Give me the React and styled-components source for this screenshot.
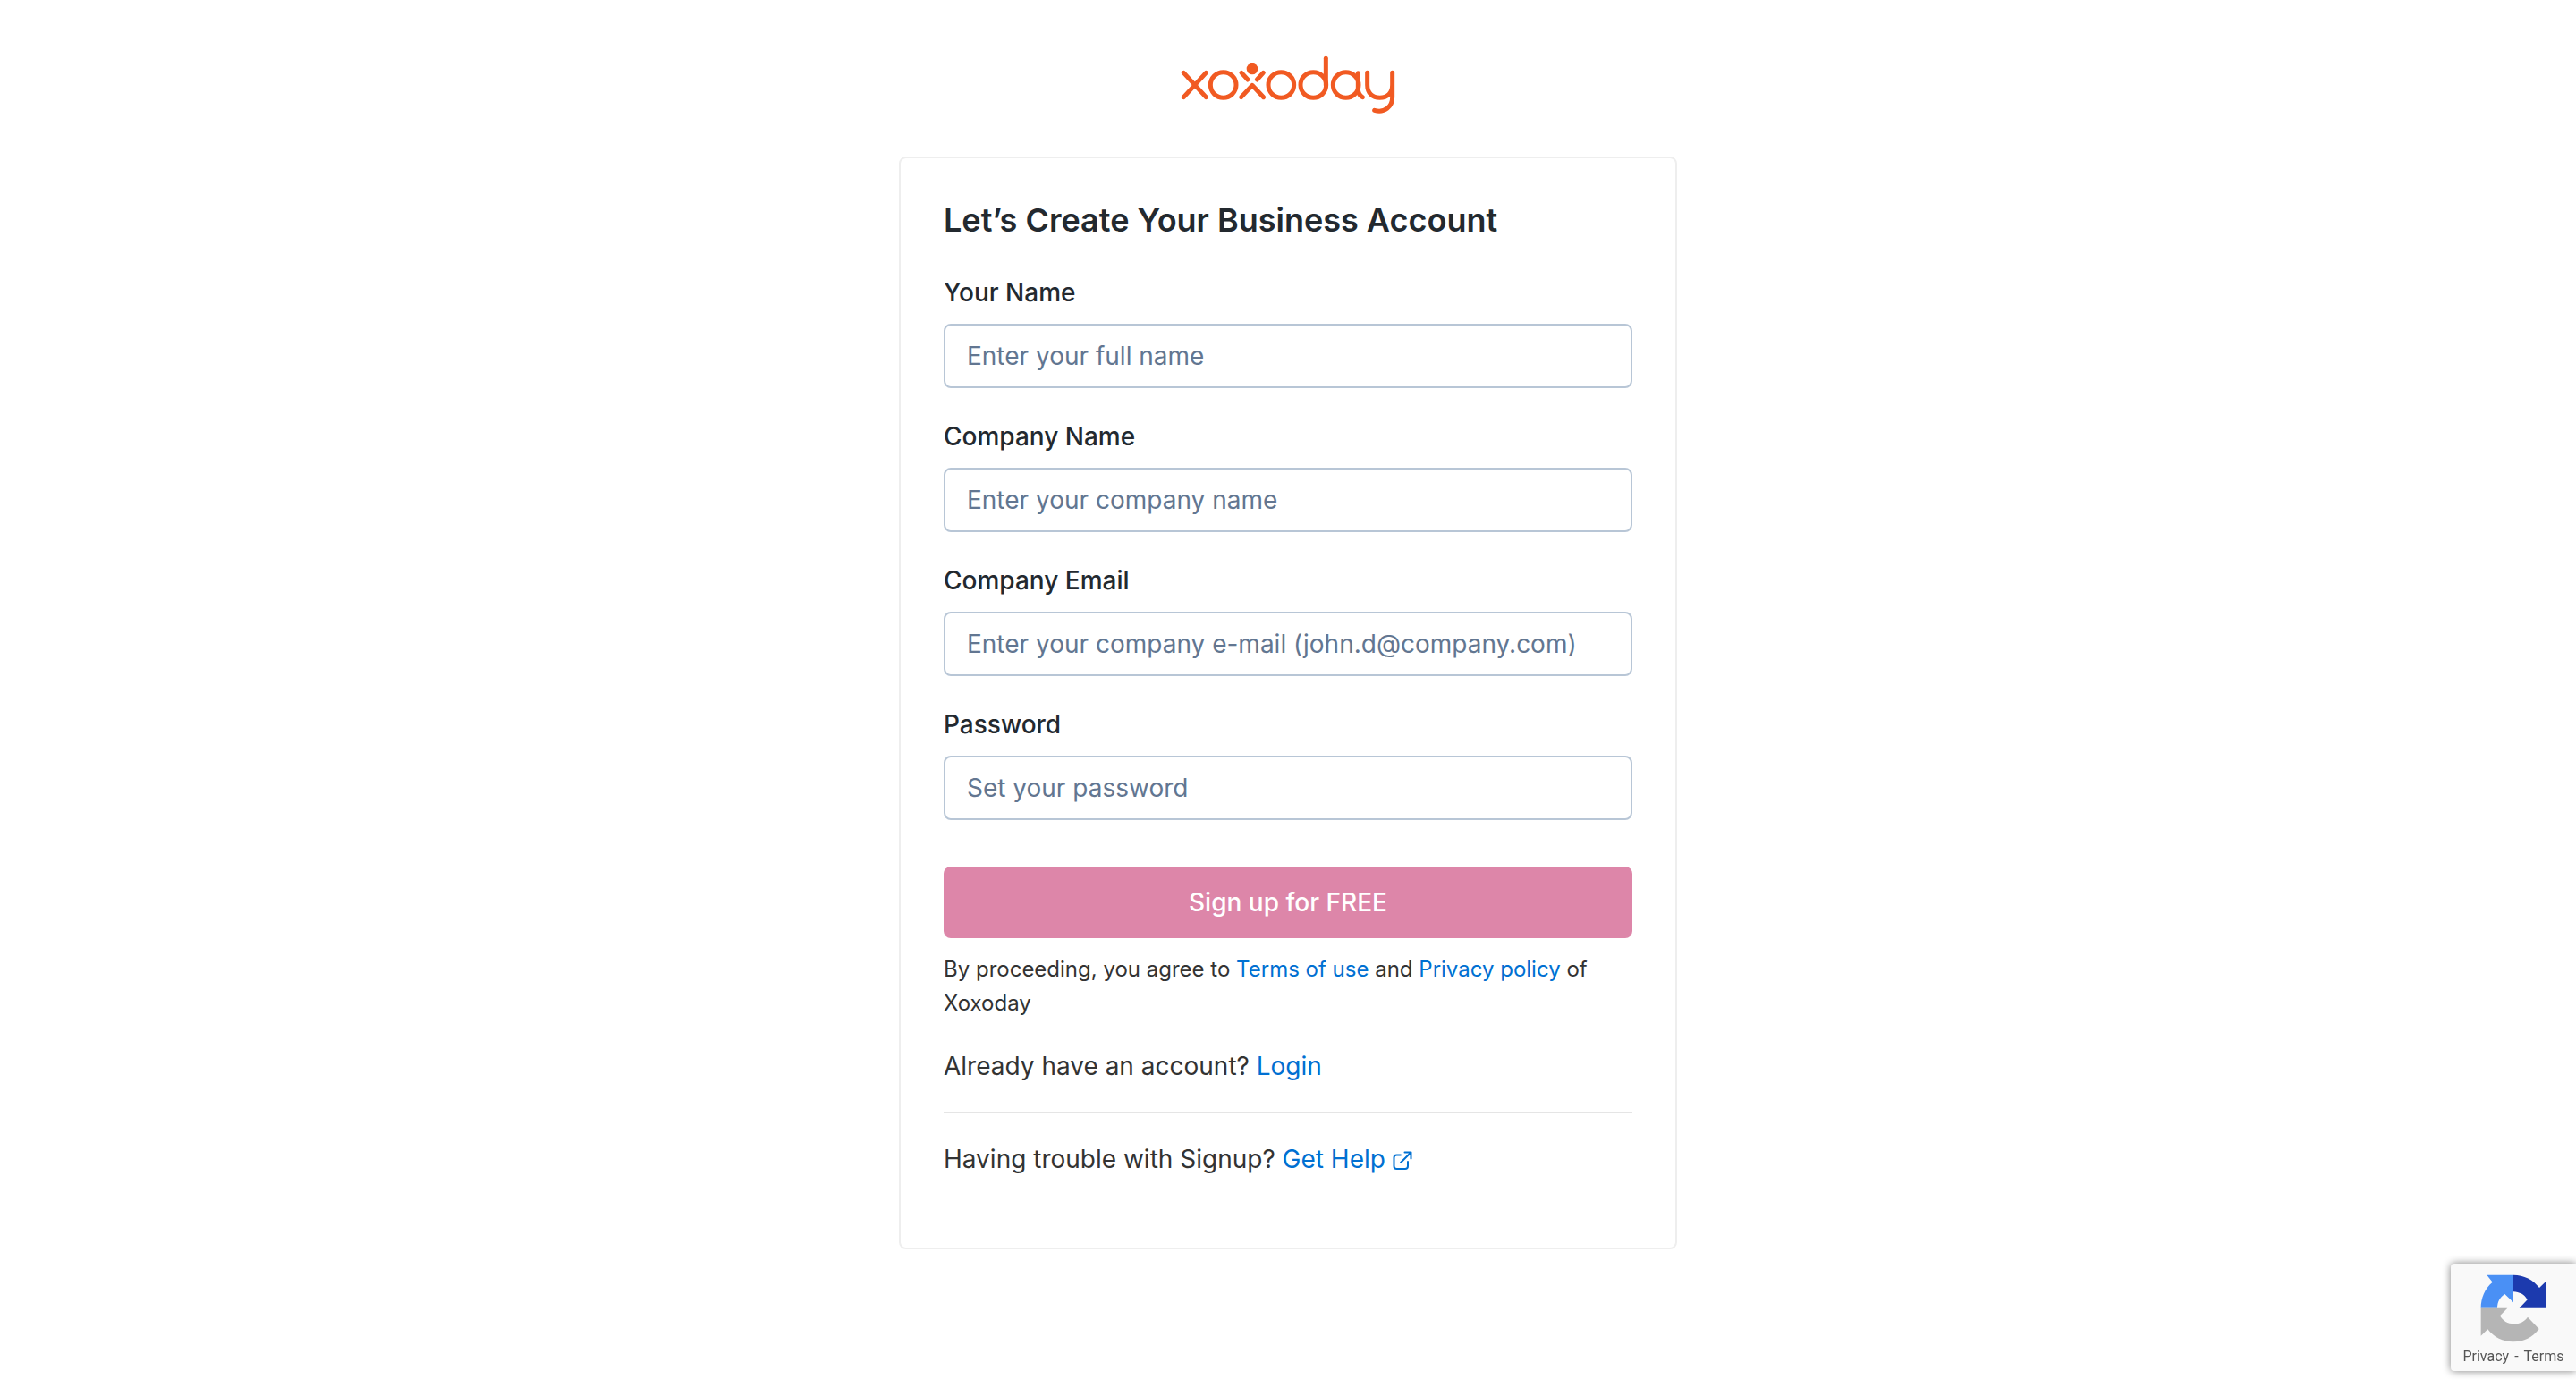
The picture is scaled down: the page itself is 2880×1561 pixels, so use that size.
import React from "react";
import styled, { createGlobalStyle } from "styled-components";

const fields = [
  { id: "name", label: "Your Name", type: "text", placeholder: "Enter your full name" },
  { id: "company", label: "Company Name", type: "text", placeholder: "Enter your company name" },
  { id: "email", label: "Company Email", type: "email", placeholder: "Enter your company e-mail (john.d@company.com)" },
  { id: "password", label: "Password", type: "password", placeholder: "Set your password" }
];

const App = () => (
  <>
    <GlobalStyle />
    <Page>
      <Logo />
      <Card>
        <Title>Let’s Create Your Business Account</Title>
        <form onSubmit={e => e.preventDefault()}>
          <Fields>
            {fields.map(field => (
              <Field key={field.id}>
                <Label htmlFor={field.id}>{field.label}</Label>
                <Input id={field.id} type={field.type} placeholder={field.placeholder} />
              </Field>
            ))}
          </Fields>
          <SubmitButton type="submit">Sign up for FREE</SubmitButton>
        </form>
        <Terms>
          By proceeding, you agree to <Link href="#terms">Terms of use</Link> and{" "}
          <Link href="#privacy">Privacy policy</Link> of Xoxoday
        </Terms>
        <Text>
          Already have an account? <Link href="#login">Login</Link>
        </Text>
        <Divider />
        <Text>
          Having trouble with Signup?{" "}
          <Link href="#help">
            Get Help <ExternalIcon />
          </Link>
        </Text>
      </Card>
    </Page>
    <Badge>
      <RecaptchaLogo />
      <BadgeLinks>
        <a href="#recaptcha-privacy">Privacy</a>
        <span>-</span>
        <a href="#recaptcha-terms">Terms</a>
      </BadgeLinks>
    </Badge>
  </>
);

export default App;

const Logo = () => (
  <LogoSvg viewBox="60 36 720 198" role="img" aria-label="xoxoday">
    <g fill="none" stroke="#f15a22" strokeWidth="15" strokeLinecap="round" strokeLinejoin="round">
      <path d="M70 94 L145 176 M145 94 L70 176" />
      <circle cx="203" cy="135" r="43" />
      <path d="M264 94 L285 117 M337 94 L316 117 M263 176 L300 136 L338 176" />
      <circle cx="397" cy="135" r="43" />
      <circle cx="505" cy="135" r="43" />
      <path d="M547 46 V135" />
      <circle cx="614" cy="135" r="43" />
      <path d="M655 95 V150 Q656 168 670 176" />
      <path d="M686 94 V135 C686 162 703 178 728 178 C753 178 770 162 770 135 M770 94 V176 C770 208 743 230 710 220" />
    </g>
    <circle cx="300" cy="81" r="19" fill="#f15a22" />
  </LogoSvg>
);

const ExternalIcon = () => (
  <IconSvg viewBox="0 0 22 22" aria-hidden="true">
    <path d="M9 4.5 H4.5 Q1.5 4.5 1.5 7.5 V17 Q1.5 20 4.5 20 H14 Q17 20 17 17 V12 M13.5 1.5 H20.5 V8.5 M20 2 L9 13" />
  </IconSvg>
);

const RecaptchaLogo = () => (
  <RecaptchaSvg viewBox="159 106 225 228" aria-hidden="true">
    <path
      fill="#4a90f5"
      d="M181 108 H270 V200 L241 172 C225 183 216 198 216 219 H161 C161 185 174 153 200 132 Z"
    />
    <path
      fill="#1c3aae"
      d="M270 108 C305 108 337 124 357 151 L381 128 V219 H290 L317 191 C307 173 290 165 270 164 Z"
    />
    <path
      fill="#b5b5b5"
      d="M161 219 H250 L225 245 C235 262 250 272 272 272 C292 272 308 264 318 249 L356 289 C334 317 305 332 270 332 C235 332 205 318 184 290 L161 312 Z"
    />
  </RecaptchaSvg>
);

const GlobalStyle = createGlobalStyle`
  *, *::before, *::after {
    box-sizing: border-box;
  }

  body {
    margin: 0;
    background: #fff;
    color: #333;
    font-family: Inter, sans-serif;
    font-size: 28px;
    line-height: 40px;
  }
`;

const Page = styled.main`
  display: flex;
  flex-direction: column;
  align-items: center;
  padding: 62px 24px;
`;

const LogoSvg = styled.svg`
  display: block;
  width: 240px;
  height: 66px;
  margin-bottom: 47px;
`;

const Card = styled.section`
  width: 100%;
  max-width: 870px;
  padding: 48px 48px 79px;
  border: 2px solid #eee;
  border-radius: 8px;
  background: #fff;
`;

const Title = styled.h1`
  margin: 0 0 40px;
  font-size: 36px;
  font-weight: 600;
  line-height: 42px;
  color: #23292f;
`;

const Fields = styled.div`
  display: grid;
  gap: 34px;
`;

const Field = styled.div`
  display: flex;
  flex-direction: column;
  gap: 15px;
`;

const Label = styled.label`
  font-weight: 500;
  color: #23292f;
`;

const Input = styled.input`
  width: 100%;
  height: 72px;
  padding: 0 24px;
  border: 2px solid #b8c6d6;
  border-radius: 8px;
  background: #fff;
  color: #23292f;
  font: inherit;

  &::placeholder {
    color: #627691;
    opacity: 1;
  }
`;

const SubmitButton = styled.button`
  width: 100%;
  height: 80px;
  margin-top: 52px;
  border: 0;
  border-radius: 8px;
  background: #dd86a9;
  color: #fff;
  font: inherit;
  font-weight: 500;
`;

const Terms = styled.p`
  margin: 16px 0 31px;
  font-size: 24px;
  line-height: 38px;
`;

const Text = styled.p`
  margin: 0;
`;

const Link = styled.a`
  color: #0070d2;
  text-decoration: none;
`;

const Divider = styled.hr`
  margin: 31px 0;
  border: 0;
  border-top: 2px solid #e5e5e5;
`;

const IconSvg = styled.svg`
  width: 22px;
  height: 22px;
  vertical-align: -3px;
  fill: none;
  stroke: currentColor;
  stroke-width: 2;
  stroke-linecap: round;
  stroke-linejoin: round;
`;

const Badge = styled.aside`
  position: fixed;
  right: 0;
  bottom: 28px;
  display: flex;
  flex-direction: column;
  align-items: center;
  width: 140px;
  height: 120px;
  padding-top: 12px;
  border-radius: 4px 0 0 4px;
  background: #f9f9f9;
  box-shadow: 0 0 10px #808080;
`;

const RecaptchaSvg = styled.svg`
  width: 75px;
  height: 76px;
`;

const BadgeLinks = styled.div`
  display: flex;
  gap: 6px;
  margin-top: 4px;
  font-family: Roboto, sans-serif;
  font-size: 16px;
  line-height: 24px;
  color: #555;

  & > a {
    color: inherit;
    text-decoration: none;
  }
`;
